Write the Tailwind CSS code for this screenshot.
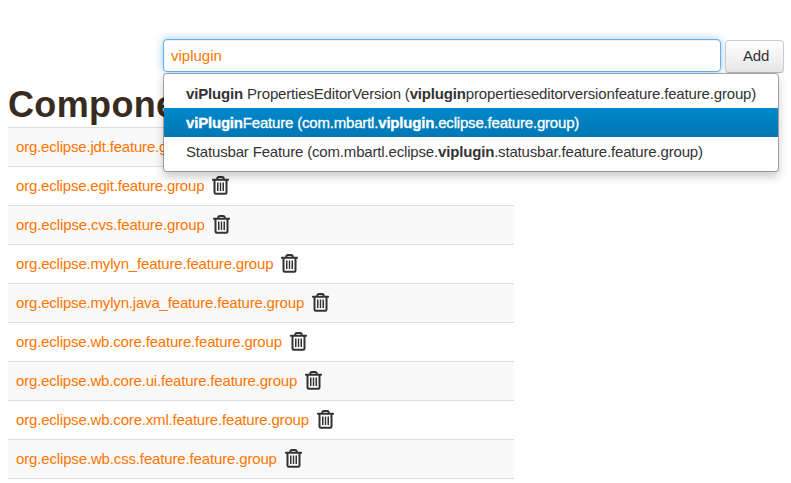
<!DOCTYPE html>
<html lang="en">
<head>
<meta charset="utf-8">
<title>Components</title>
<script src="https://cdn.jsdelivr.net/npm/@tailwindcss/browser@4"></script>
</head>
<body class="bg-white text-[#333] text-[15px] leading-5 font-['Liberation_Sans',Arial,sans-serif] overflow-hidden">
<svg class="hidden">
  <symbol id="trash" viewBox="0 0 17 19">
    <path fill="none" stroke="#333" stroke-width="2" d="M5.300 3.500V2.600Q5.300 1 6.900 1h3.200q1.600 0 1.600 1.600v.9M2.500 4v12.400q0 1.300 1.300 1.300h9.400q1.300 0 1.300-1.300V4"/>
    <path fill="#333" d="M.7 2.800h15.600q.7 0 .7.700v.6q0 .7-.7.700H.7Q0 4.800 0 4.100v-.6q0-.7.700-.7zM5 6.500h1.500v8.500H5zM7.800 6.500h1.400v8.500H7.800zM10.500 6.500H12v8.500h-1.500z"/>
  </symbol>
</svg>
<form class="relative ml-[163px] pt-[39px] flex items-start">
  <input class="w-[558px] h-[33px] rounded border border-[#66afe9] bg-white px-[7px] text-[#ff7500] outline-none shadow-[inset_0_1px_1px_rgba(0,0,0,.075),0_0_8px_rgba(82,168,236,.6)]" value="viplugin">
  <button type="button" class="ml-1 mt-px w-[59px] h-[33px] pb-[2px] pl-[3px] rounded border border-[#ccc] border-b-[#b3b3b3] bg-linear-to-b from-white to-[#e6e6e6] tracking-[-0.2px] shadow-[inset_0_1px_0_rgba(255,255,255,.2),0_1px_2px_rgba(0,0,0,.05)]">Add</button>
  <ul class="absolute left-0 top-[73px] z-10 w-[616px] h-[99px] rounded border border-black/30 bg-white bg-clip-padding py-[5px] shadow-[0_5px_10px_rgba(0,0,0,.2)] whitespace-nowrap [&>li]:h-[29px] [&>li]:pl-[22px] [&>li]:leading-[29px]">
    <li><span class="tracking-[-0.165px]"><b>viPlugin</b> PropertiesEditorVersion (<b>viplugin</b>propertieseditorversionfeature.feature.group)</span></li>
    <li class="bg-linear-to-b from-[#0088cc] to-[#0077b3] text-white [-webkit-text-stroke:0.3px_white]"><span class="tracking-[-0.19px]"><b>viPlugin</b>Feature (com.mbartl.<b>viplugin</b>.eclipse.feature.group)</span></li>
    <li><span class="tracking-[-0.17px]">Statusbar Feature (com.mbartl.eclipse.<b>viplugin</b>.statusbar.feature.feature.group)</span></li>
  </ul>
</form>
<main class="ml-2 w-[506px]">
  <h1 class="mt-[13px] h-[41px] text-[36px] leading-[38px] font-bold tracking-[0.35px] text-[#382b1f]">Components</h1>
  <ul class="border-b border-[#ddd] text-[#ff7500] [&>li]:flex [&>li]:h-[39px] [&>li]:items-center [&>li]:gap-2 [&>li]:border-t [&>li]:border-[#ddd] [&>li]:px-2 [&>li:nth-child(odd)]:bg-[#f9f9f9] [&_svg]:mb-px [&_svg]:h-[19px] [&_svg]:w-[17px]">
    <li><a class="tracking-[-0.19px]">org.eclipse.jdt.feature.group</a><svg><use href="#trash"/></svg></li>
    <li><a class="tracking-[-0.2px]">org.eclipse.egit.feature.group</a><svg><use href="#trash"/></svg></li>
    <li><a class="tracking-[-0.138px]">org.eclipse.cvs.feature.group</a><svg><use href="#trash"/></svg></li>
    <li><a class="tracking-[-0.18px]">org.eclipse.mylyn_feature.feature.group</a><svg><use href="#trash"/></svg></li>
    <li><a class="tracking-[-0.18px]">org.eclipse.mylyn.java_feature.feature.group</a><svg><use href="#trash"/></svg></li>
    <li><a class="tracking-[-0.187px]">org.eclipse.wb.core.feature.feature.group</a><svg><use href="#trash"/></svg></li>
    <li><a class="tracking-[-0.186px]">org.eclipse.wb.core.ui.feature.feature.group</a><svg><use href="#trash"/></svg></li>
    <li><a class="tracking-[-0.18px]">org.eclipse.wb.core.xml.feature.feature.group</a><svg><use href="#trash"/></svg></li>
    <li><a class="tracking-[-0.15px]">org.eclipse.wb.css.feature.feature.group</a><svg><use href="#trash"/></svg></li>
  </ul>
</main>
</body>
</html>
